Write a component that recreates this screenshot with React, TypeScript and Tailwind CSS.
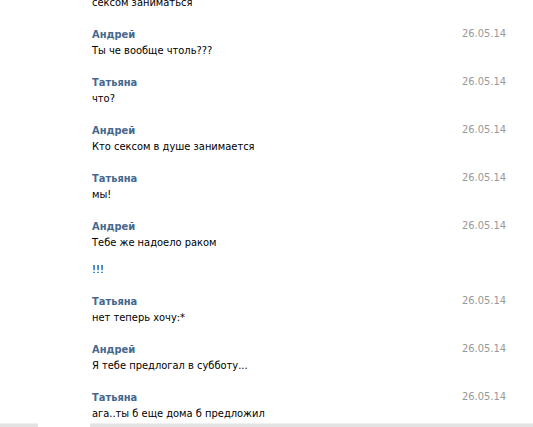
import React from "react"

type Message = {
  author: string
  lines: string[]
  date: string
}

const messages: Message[] = [
  { author: "Андрей", lines: ["Ты че вообще чтоль???"], date: "26.05.14" },
  { author: "Татьяна", lines: ["что?"], date: "26.05.14" },
  { author: "Андрей", lines: ["Кто сексом в душе занимается"], date: "26.05.14" },
  { author: "Татьяна", lines: ["мы!"], date: "26.05.14" },
  { author: "Андрей", lines: ["Тебе же надоело раком", "!!!"], date: "26.05.14" },
  { author: "Татьяна", lines: ["нет теперь хочу:*"], date: "26.05.14" },
  { author: "Андрей", lines: ["Я тебе предлогал в субботу..."], date: "26.05.14" },
  { author: "Татьяна", lines: ["ага..ты б еще дома б предложил"], date: "26.05.14" },
]

function MessageRow({ msg }: { msg: Message }) {
  return (
    <div className="flex pt-[17px]">
      <div className="flex-1 pl-[92px]">
        <div className="text-[11px] leading-[16px] font-bold text-[#45688e]">{msg.author}</div>
        {msg.lines.map((line, i) => (
          <div key={i} className={`text-[11px] leading-[15px] text-black ${i > 0 ? "mt-[12px]" : ""}`}>
            {line}
          </div>
        ))}
      </div>
      <div className="w-[71px] text-[11px] leading-[14px] text-[#999999]">{msg.date}</div>
    </div>
  )
}

export default function App() {
  return (
    <div
      className="flex h-[427px] w-[533px] flex-col overflow-hidden bg-white"
      style={{ fontFamily: '"DejaVu Sans Condensed", "DejaVu Sans", sans-serif' }}
    >
      <div className="flex-1 overflow-hidden">
        <div className="-mt-[5px] pl-[92px] text-[11px] leading-[15px] text-black">сексом заниматься</div>
        {messages.map((m, i) => (
          <MessageRow key={i} msg={m} />
        ))}
      </div>
      <div className="flex h-[4px] shrink-0">
        <div className="w-[38px] border-t border-[#f0f0f0] bg-[#e3e3e3]" />
        <div className="w-[52px] bg-white" />
        <div className="flex-1 border-t border-[#f0f0f0] bg-[#e3e3e3]" />
      </div>
    </div>
  )
}
